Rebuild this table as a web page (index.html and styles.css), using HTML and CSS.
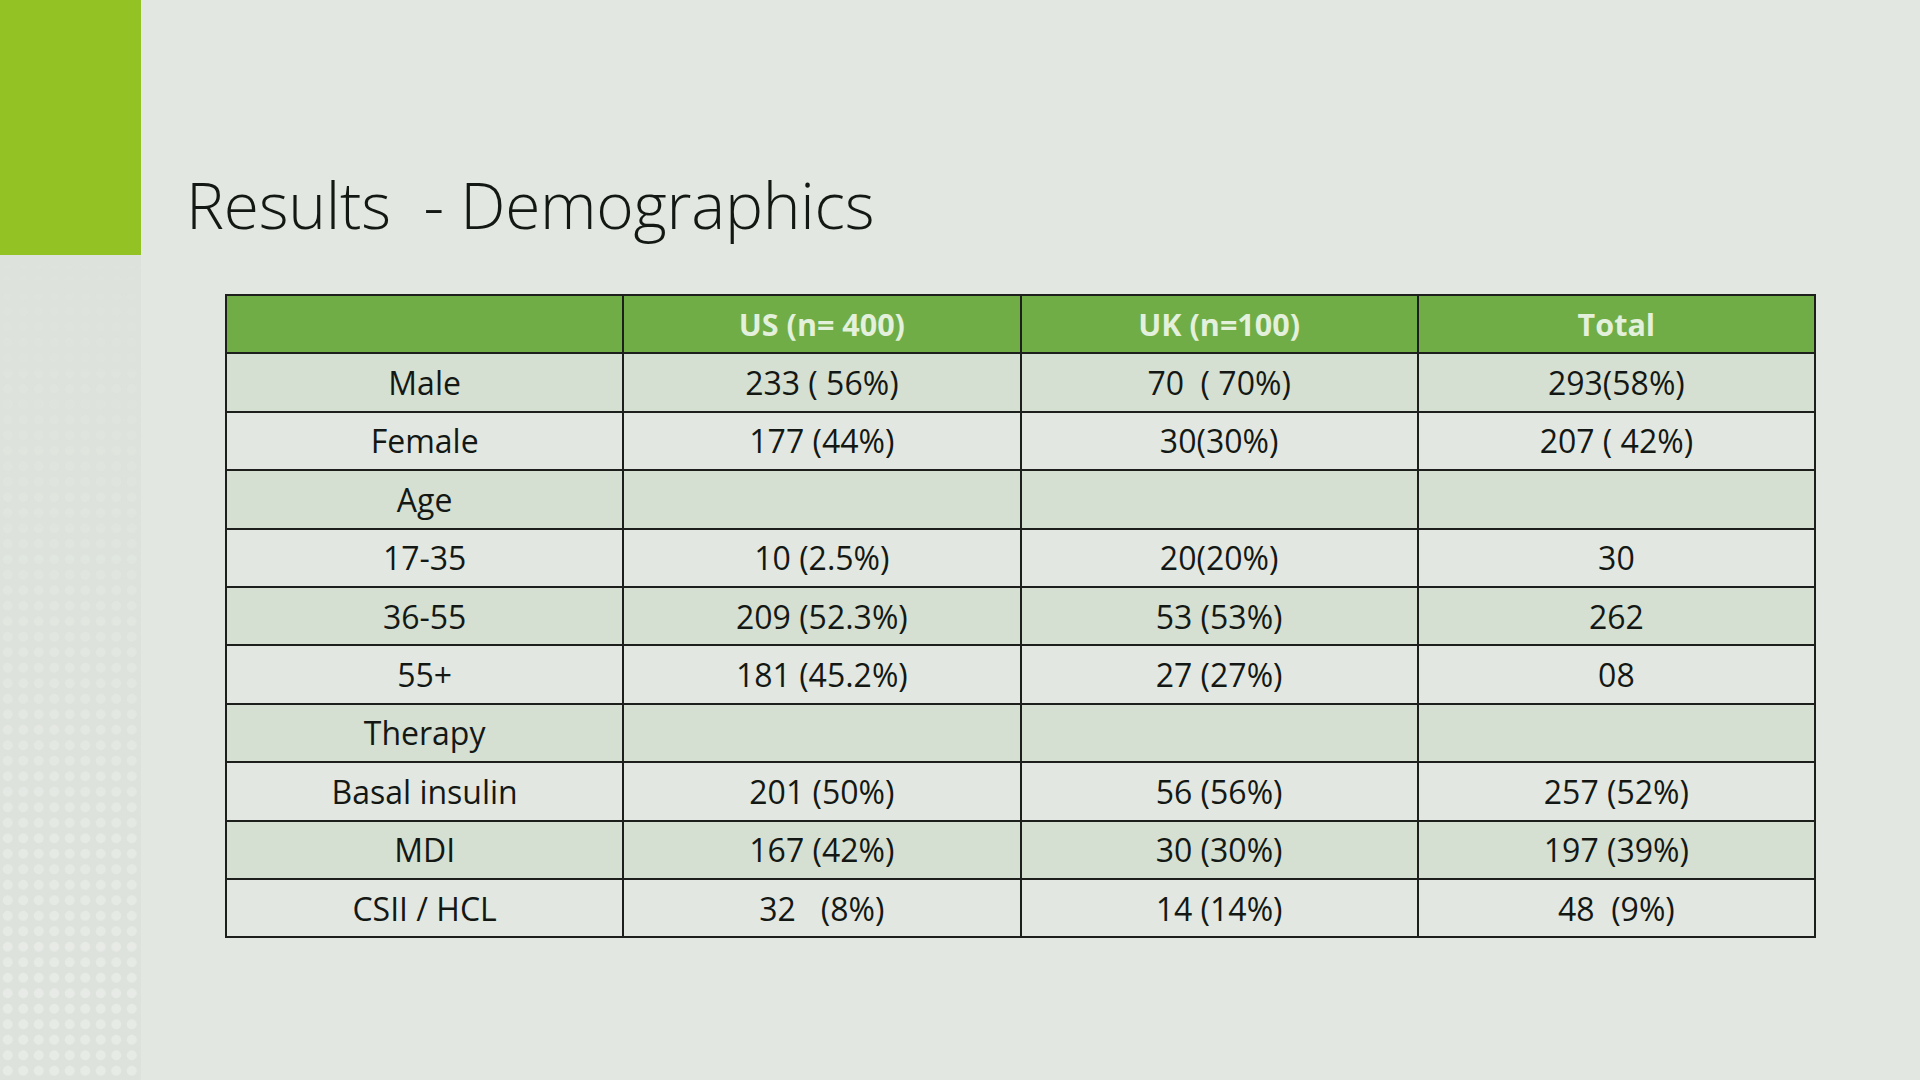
FILE: index.html
```html
<!DOCTYPE html>
<html lang="en">
<head>
<meta charset="utf-8">
<title>Results - Demographics</title>
<link rel="stylesheet" href="styles.css">
</head>
<body>
<div class="slide">
  <aside class="sidebar">
    <div class="accent"></div>
    <div class="dots"></div>
  </aside>
  <main class="content">
    <h1 class="title">Results&nbsp; - Demographics</h1>
    <table class="demo">
      <thead>
        <tr><th></th><th>US (n= 400)</th><th>UK (n=100)</th><th>Total</th></tr>
      </thead>
      <tbody>
        <tr class="band"><td>Male</td><td>233 ( 56%)</td><td>70&nbsp; ( 70%)</td><td>293(58%)</td></tr>
        <tr><td>Female</td><td>177 (44%)</td><td>30(30%)</td><td>207 ( 42%)</td></tr>
        <tr class="band"><td>Age</td><td></td><td></td><td></td></tr>
        <tr><td>17-35</td><td>10 (2.5%)</td><td>20(20%)</td><td>30</td></tr>
        <tr class="band"><td>36-55</td><td>209 (52.3%)</td><td>53 (53%)</td><td>262</td></tr>
        <tr><td>55+</td><td>181 (45.2%)</td><td>27 (27%)</td><td>08</td></tr>
        <tr class="band"><td>Therapy</td><td></td><td></td><td></td></tr>
        <tr><td>Basal insulin</td><td>201 (50%)</td><td>56 (56%)</td><td>257 (52%)</td></tr>
        <tr class="band"><td>MDI</td><td>167 (42%)</td><td>30 (30%)</td><td>197 (39%)</td></tr>
        <tr><td>CSII / HCL</td><td>32&nbsp;&nbsp; (8%)</td><td>14 (14%)</td><td>48&nbsp; (9%)</td></tr>
      </tbody>
    </table>
  </main>
</div>
</body>
</html>
```

FILE: styles.css
```css
html, body {
  margin: 0;
  padding: 0;
}

body {
  width: 1920px;
  height: 1080px;
  overflow: hidden;
  background: #e2e8e1;
  font-family: "Open Sans", "Liberation Sans", sans-serif;
  color: #141814;
}

.slide {
  display: flex;
  width: 1920px;
  height: 1080px;
}

.sidebar {
  width: 141px;
  flex: 0 0 141px;
  display: flex;
  flex-direction: column;
}

.accent {
  height: 255px;
  background: #93c225;
}

.dots {
  flex: 1;
  position: relative;
  background-color: #dde2dc;
}

.dots::before {
  content: "";
  position: absolute;
  inset: 0;
  background-image: radial-gradient(circle, #e7ebe6 0, #e7ebe6 4.5px, transparent 5.5px);
  background-size: 15.5px 15.5px;
  background-position: 0 2px;
  -webkit-mask-image: linear-gradient(to bottom, rgba(0,0,0,0.1) 0%, rgba(0,0,0,0.35) 35%, rgba(0,0,0,0.8) 70%, #000 100%);
  mask-image: linear-gradient(to bottom, rgba(0,0,0,0.1) 0%, rgba(0,0,0,0.35) 35%, rgba(0,0,0,0.8) 70%, #000 100%);
}

.content {
  flex: 1;
  padding-top: 173px;
}

.title {
  margin: 0 0 57px 45px;
  font-family: "Open Sans", "Liberation Sans", sans-serif;
  font-weight: 300;
  font-size: 64px;
  line-height: 64px;
  letter-spacing: -0.25px;
  color: #141814;
  white-space: pre;
}

.demo {
  margin-left: 84px;
  width: 1591px;
  border-collapse: collapse;
  table-layout: fixed;
  border: 2px solid #1c1f1b;
}

.demo th,
.demo td {
  border: 2px solid #1c1f1b;
  height: 56.4px;
  padding: 0;
  text-align: center;
  vertical-align: middle;
  white-space: pre;
}

.demo th {
  background: #70ad47;
  color: #e3f0dc;
  font-weight: 700;
  font-size: 30.5px;
}

.demo td {
  background: #e2e8e1;
  font-size: 32px;
  font-weight: 400;
}

.demo tr.band td {
  background: #d5e0d2;
}
```
